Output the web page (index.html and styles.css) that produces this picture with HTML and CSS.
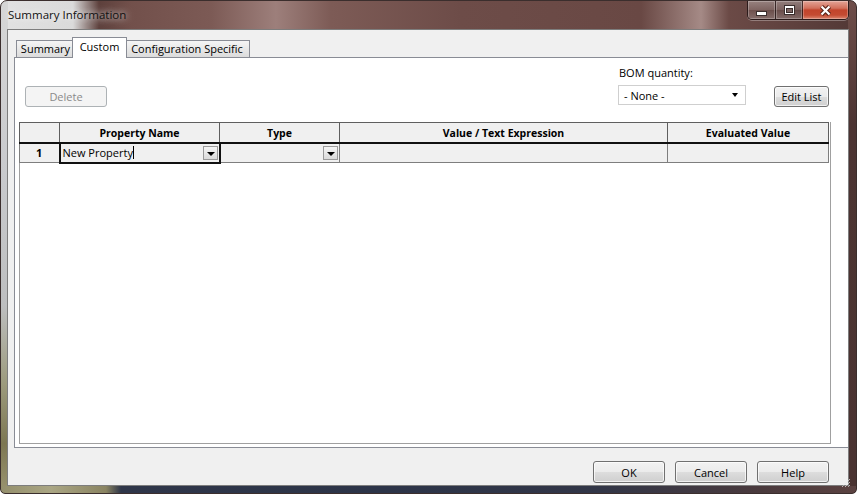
FILE: index.html
```html
<!DOCTYPE html>
<html lang="en">
<head>
    <meta charset="UTF-8">
    <title>Summary Information</title>
    <link rel="stylesheet" href="styles.css">
</head>
<body>
    <div class="window">
        <!-- Title bar -->
        <div class="titlebar">
            <span class="title">Summary Information</span>
            <div class="caption">
                <span class="cap-btn cap-min">
                    <svg width="11" height="5" viewBox="0 0 11 5"><rect x="0.5" y="0.5" width="10" height="4" fill="#fff" stroke="#3a2e2d"/></svg>
                </span>
                <span class="cap-btn cap-max">
                    <svg width="11" height="10" viewBox="0 0 11 10"><rect x="0.5" y="0.5" width="10" height="9" fill="#fff" stroke="#3a2e2d"/><rect x="2.5" y="3.5" width="6" height="4" fill="#7d6562" stroke="#3a2e2d"/></svg>
                </span>
                <span class="cap-btn cap-close">
                    <svg width="13" height="11" viewBox="0 0 13 11"><path d="M2.5 1.5L10.5 9.5M10.5 1.5L2.5 9.5" stroke="#5a2418" stroke-width="4.4"/><path d="M2.5 1.5L10.5 9.5M10.5 1.5L2.5 9.5" stroke="#fff" stroke-width="2.2"/></svg>
                </span>
            </div>
        </div>

        <div class="client">
            <!-- Tabs -->
            <div class="tabs">
                <div class="tab tab-summary">Summary</div>
                <div class="tab tab-custom active">Custom</div>
                <div class="tab tab-config">Configuration Specific</div>
            </div>

            <div class="panel">
                <div class="toolbar">
                    <button class="btn btn-delete" disabled>Delete</button>
                    <div class="bom">
                        <div class="bom-label">BOM quantity:</div>
                        <div class="combo">
                            <span>- None -</span>
                            <span class="combo-arrow"></span>
                        </div>
                    </div>
                    <button class="btn btn-edit">Edit List</button>
                </div>

                <!-- Property grid -->
                <div class="grid">
                    <table class="props">
                        <colgroup>
                            <col class="c-num">
                            <col class="c-name">
                            <col class="c-type">
                            <col class="c-value">
                            <col class="c-eval">
                        </colgroup>
                        <thead>
                            <tr>
                                <th></th>
                                <th>Property Name</th>
                                <th>Type</th>
                                <th>Value / Text Expression</th>
                                <th>Evaluated Value</th>
                            </tr>
                        </thead>
                        <tbody>
                            <tr>
                                <td class="num">1</td>
                                <td class="editing">
                                    <div class="cell">
                                        <span>New Property</span><span class="caret"></span>
                                        <span class="drop"></span>
                                    </div>
                                </td>
                                <td>
                                    <div class="cell">
                                        <span class="drop"></span>
                                    </div>
                                </td>
                                <td></td>
                                <td></td>
                            </tr>
                        </tbody>
                    </table>
                </div>
            </div>

            <div class="footer">
                <button class="btn">OK</button>
                <button class="btn">Cancel</button>
                <button class="btn">Help</button>
            </div>
        </div>

        <svg class="grip" width="12" height="12" viewBox="0 0 12 12">
            <path d="M11 3L3 11M11 6L6 11M11 9L9 11" stroke="#e8e8e8" stroke-width="1" stroke-dasharray="1 1"/>
        </svg>
    </div>
</body>
</html>
```

FILE: styles.css
```css
* {
    box-sizing: border-box;
}

body {
    margin: 0;
    background: #fff;
    font-family: "Open Sans", "Noto Sans", sans-serif;
    font-size: 11px;
    color: #000;
}

/* Window frame */
.window {
    position: relative;
    width: 857px;
    height: 494px;
    display: flex;
    flex-direction: column;
    padding: 0 7px 7px 6px;
    border: 1px solid #3b2e2d;
    border-radius: 7px 7px 5px 5px;
    overflow: hidden;
    background:
        linear-gradient(to right, #948f6c 0, #aaa684 50px, #8a8462 105px, #2f3649 120px, #2c3448 380px, #323647 600px, #4a3a3d 760px, #5b4241 100%) left bottom / 100% 7px no-repeat,
        linear-gradient(to bottom, #d6d6d6 0, #c9cacd 35%, #bdbebf 62%, #9c9a7c 78%, #7d7752 90%, #9a9470 100%) left top / 7px 100% no-repeat,
        linear-gradient(to bottom, #6f4e4a 0, #4c3432 25%, #4a3331 100%) right top / 8px 100% no-repeat,
        linear-gradient(to right, #e2e2e2 0, #dadada 72px, #5d403c 98px, #72504b 130px, #7c5a55 210px, #9d7f7b 275px, #7d5b56 330px, #6d4c48 460px, #694844 640px, #a58a86 700px, #6b4a46 728px, #523836 100%);
}

.titlebar {
    flex: none;
    display: flex;
    height: 28px;
}

.title {
    padding: 6px 0 0 1px;
    line-height: 16px;
    font-size: 11.5px;
    color: #111;
    text-shadow: 0 0 6px rgba(255, 255, 255, 0.9), 0 0 12px rgba(255, 255, 255, 0.6);
}

.caption {
    margin-left: auto;
    display: flex;
    height: 19px;
    border: 1px solid rgba(35, 20, 20, 0.85);
    border-top: 0;
    border-radius: 0 0 5px 5px;
    overflow: hidden;
    box-shadow: 0 1px 0 rgba(255, 255, 255, 0.3);
}

.cap-btn {
    display: flex;
    align-items: center;
    justify-content: center;
    width: 27px;
    box-shadow: inset 0 0 0 1px rgba(255, 255, 255, 0.25);
    background: linear-gradient(rgba(255, 255, 255, 0.32), rgba(255, 255, 255, 0.16) 50%, rgba(255, 255, 255, 0.05) 50%, rgba(255, 255, 255, 0.22));
}

.cap-min {
    padding-top: 6px;
}

.cap-max,
.cap-close {
    border-left: 1px solid rgba(35, 20, 20, 0.8);
}

.cap-close {
    width: 46px;
    background: linear-gradient(#e3a497 0, #d2705c 40%, #c2442c 50%, #c44b32 78%, #dc8670 100%);
}

.grip {
    position: absolute;
    right: 5px;
    bottom: 5px;
}

/* Client area */
.client {
    flex: 1;
    display: flex;
    flex-direction: column;
    border: 1px solid #7d7d7d;
    background: #f0f0f0;
    overflow: hidden;
}

.tabs {
    flex: none;
    display: flex;
    align-items: flex-end;
    height: 27px;
    padding-left: 8px;
}

.tab {
    height: 17px;
    margin-right: -1px;
    border: 1px solid #898c95;
    border-bottom: 0;
    line-height: 15px;
    text-align: center;
    background: linear-gradient(#f5f5f5, #e8e8e8 50%, #dcdcdc);
}

.tab-summary { width: 59px; }
.tab-custom { width: 55px; }
.tab-config { width: 126px; }

.tab.active {
    position: relative;
    z-index: 1;
    height: 21px;
    margin: 0 -3px -1px -2px;
    line-height: 17px;
    background: #fff;
}

.panel {
    flex: 1;
    display: flex;
    flex-direction: column;
    margin: 0 -1px 0 6px;
    border: 1px solid #898c95;
    background: #fff;
}

.toolbar {
    display: flex;
    align-items: flex-end;
    padding: 7px 19px 0 10px;
}

.bom {
    margin: 0 28px 2px auto;
}

.bom-label {
    padding-left: 1px;
    line-height: 15px;
    margin-bottom: 5px;
}

.combo {
    display: flex;
    align-items: center;
    justify-content: space-between;
    width: 128px;
    height: 20px;
    padding: 0 7px 0 5px;
    border: 1px solid #cfcfcf;
    background: #fff;
}

.combo-arrow {
    width: 0;
    height: 0;
    border-left: 3.5px solid transparent;
    border-right: 3.5px solid transparent;
    border-top: 4px solid #000;
}

/* Buttons */
.btn {
    height: 21px;
    padding: 0;
    font: inherit;
    color: #000;
    border: 1px solid #707070;
    border-radius: 3px;
    box-shadow: inset 0 0 0 1px rgba(255, 255, 255, 0.7);
    background: linear-gradient(#f2f2f2, #ebebeb 50%, #dddddd 50%, #cfcfcf);
}

.btn-delete {
    width: 82px;
    color: #8a8a8a;
    border-color: #adb2b5;
    box-shadow: none;
    background: #f4f4f4;
}

.btn-edit {
    width: 55px;
}

/* Property grid */
.grid {
    flex: 1;
    margin: 15px 17px 3px 4px;
    border: 1px solid #a0a0a0;
    border-top: 0;
    background: #fff;
}

.props {
    width: 810px;
    margin-left: -1px;
    border-collapse: collapse;
    table-layout: fixed;
}

.c-num { width: 40px; }
.c-name { width: 160px; }
.c-type { width: 120px; }
.c-value { width: 328px; }
.c-eval { width: 161px; }

.props th {
    height: 20px;
    padding: 2px 0 0;
    line-height: 14px;
    font-size: 10.5px;
    font-weight: bold;
    border: 1px solid #5f5f5f;
    border-bottom: 2px solid #111;
    background: #f0f0f0;
}

.props td {
    height: 20px;
    padding: 0;
    border: 1px solid #7e7e7e;
    background: #f0f0f0;
}

.props td.num {
    text-align: center;
    font-weight: bold;
}

.props td.editing {
    border: 2px solid #111;
}

.cell {
    display: flex;
    align-items: center;
    padding: 0 1px 0 2px;
}

.caret {
    width: 1px;
    height: 13px;
    background: #000;
}

.drop {
    position: relative;
    width: 15px;
    height: 14px;
    margin-left: auto;
    border: 1px solid #9a9a9a;
    background: linear-gradient(#f4f4f4, #dadada);
}

.drop::after {
    content: "";
    position: absolute;
    left: 3px;
    top: 5px;
    border-left: 4px solid transparent;
    border-right: 4px solid transparent;
    border-top: 4px solid #000;
}

/* Dialog buttons */
.footer {
    flex: none;
    display: flex;
    justify-content: flex-end;
    gap: 10px;
    height: 37px;
    padding: 13px 19px 0 0;
}

.footer .btn {
    width: 72px;
    height: 22px;
}
```
